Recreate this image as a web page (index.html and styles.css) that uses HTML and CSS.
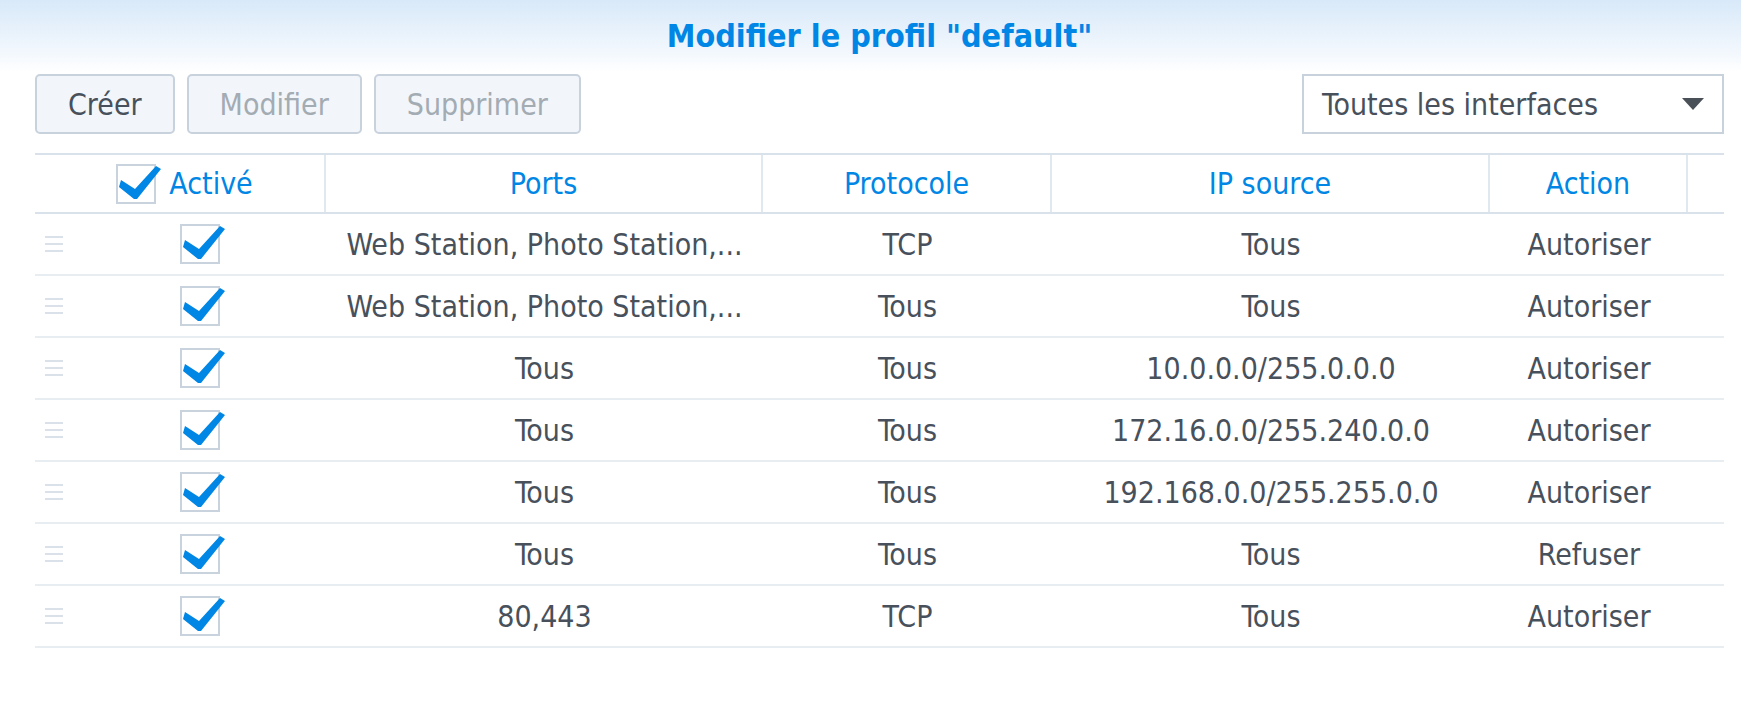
FILE: index.html
```html
<!DOCTYPE html>
<html>
<head>
    <title>Modifier le profil "default"</title>
    <link rel="stylesheet" href="styles.css">
</head>
<body>
    <div class="dialog-head">
        <h1 class="dialog-title">Modifier le profil "default"</h1>
    </div>

    <div class="content">
        <div class="toolbar">
            <div class="btn-group">
                <button class="btn">Créer</button>
                <button class="btn" disabled>Modifier</button>
                <button class="btn" disabled>Supprimer</button>
            </div>
            <div class="select">
                <span>Toutes les interfaces</span>
                <svg class="select-arrow" width="22" height="12" viewBox="0 0 22 12"><path d="M0 0 H22 L11 12 Z" fill="#4a5058"/></svg>
            </div>
        </div>

        <div class="grid">
            <div class="grid-head">
                <div class="hcell hcell-check">
                    <span class="checkbox"><svg width="36" height="36" viewBox="0 0 36 36"><path d="M3 14 L17 23 L38 0 L43 3 L19 33 L16 33 L1 21 Z"/></svg></span>
                    <span>Activé</span>
                </div>
                <div class="hcell">Ports</div>
                <div class="hcell">Protocole</div>
                <div class="hcell">IP source</div>
                <div class="hcell">Action</div>
                <div class="hcell"></div>
            </div>

            <div id="rows">
                <!-- rows are built by the script below -->
            </div>
        </div>
    </div>

    <script>
        // Firewall rules of the profile
        const rules = [
            ["Web Station, Photo Station,...", "TCP", "Tous", "Autoriser"],
            ["Web Station, Photo Station,...", "Tous", "Tous", "Autoriser"],
            ["Tous", "Tous", "10.0.0.0/255.0.0.0", "Autoriser"],
            ["Tous", "Tous", "172.16.0.0/255.240.0.0", "Autoriser"],
            ["Tous", "Tous", "192.168.0.0/255.255.0.0", "Autoriser"],
            ["Tous", "Tous", "Tous", "Refuser"],
            ["80,443", "TCP", "Tous", "Autoriser"]
        ];

        const checkMark = '<span class="checkbox"><svg width="36" height="36" viewBox="0 0 36 36"><path d="M3 14 L17 23 L38 0 L43 3 L19 33 L16 33 L1 21 Z"/></svg></span>';

        function displayRules() {
            const rowsBox = document.getElementById("rows");
            rowsBox.innerHTML = "";

            rules.forEach(rule => {
                const row = document.createElement("div");
                row.className = "grid-row";

                let html = '<div class="cell"><span class="handle"><i></i><i></i><i></i></span></div>';
                html += '<div class="cell">' + checkMark + '</div>';
                rule.forEach(value => {
                    html += '<div class="cell">' + value + '</div>';
                });
                html += '<div class="cell"></div>';

                row.innerHTML = html;
                rowsBox.appendChild(row);
            });
        }

        displayRules();
    </script>
</body>
</html>
```

FILE: styles.css
```css
body {
    margin: 0;
    font-family: "DejaVu Sans Condensed", "DejaVu Sans", sans-serif;
    font-stretch: condensed;
    color: #48515b;
    background-color: #fff;
}

.dialog-head {
    height: 72px;
    padding: 0 17px 0 35px;
    display: flex;
    align-items: center;
    justify-content: center;
    background: linear-gradient(#d8e9f9 0%, #f1f7fd 70%, #ffffff 100%);
}

.dialog-title {
    margin: 0;
    font-size: 32px;
    font-weight: bold;
    color: #0086e5;
}

.content {
    padding: 2px 17px 0 35px;
}

.toolbar {
    display: flex;
    justify-content: space-between;
    height: 60px;
    margin-bottom: 19px;
}

.btn-group {
    display: flex;
    gap: 12px;
}

.btn {
    font: inherit;
    font-size: 30px;
    height: 60px;
    padding: 0 31px;
    border: 2px solid #c8d2dd;
    border-radius: 5px;
    background-color: #f2f6fb;
    color: #48515b;
    cursor: pointer;
}

.btn:disabled {
    color: #a3abb3;
    cursor: default;
}

.select {
    box-sizing: border-box;
    width: 422px;
    height: 60px;
    padding: 0 18px;
    border: 2px solid #c8d2dd;
    display: flex;
    align-items: center;
    justify-content: space-between;
    font-size: 30px;
    background-color: #fff;
}

/* Rules grid */
.grid-head,
.grid-row {
    display: grid;
    grid-template-columns: 38px 253px 437px 289px 438px 198px 36px;
    box-sizing: border-box;
    font-size: 30px;
    text-align: center;
}

.grid-head {
    height: 61px;
    border-top: 2px solid #d9e2eb;
    border-bottom: 2px solid #d9e2eb;
    color: #0086e5;
}

.hcell {
    display: flex;
    align-items: center;
    justify-content: center;
    border-right: 2px solid #e0e8f0;
}

.hcell:last-child {
    border-right: none;
}

.hcell-check {
    grid-column: span 2;
    gap: 13px;
    padding-left: 10px;
}

.grid-row {
    height: 62px;
    border-bottom: 2px solid #e8edf2;
}

.cell {
    display: flex;
    align-items: center;
    justify-content: center;
    white-space: nowrap;
}

.checkbox {
    box-sizing: border-box;
    width: 40px;
    height: 40px;
    border: 2px solid #c9d3dd;
    background-color: #fff;
    display: inline-block;
}

.checkbox svg {
    display: block;
    overflow: visible;
    fill: #0086e5;
}

.handle {
    width: 18px;
    display: flex;
    flex-direction: column;
    gap: 5px;
}

.handle i {
    display: block;
    height: 2px;
    background-color: #dbe1e8;
}
```
